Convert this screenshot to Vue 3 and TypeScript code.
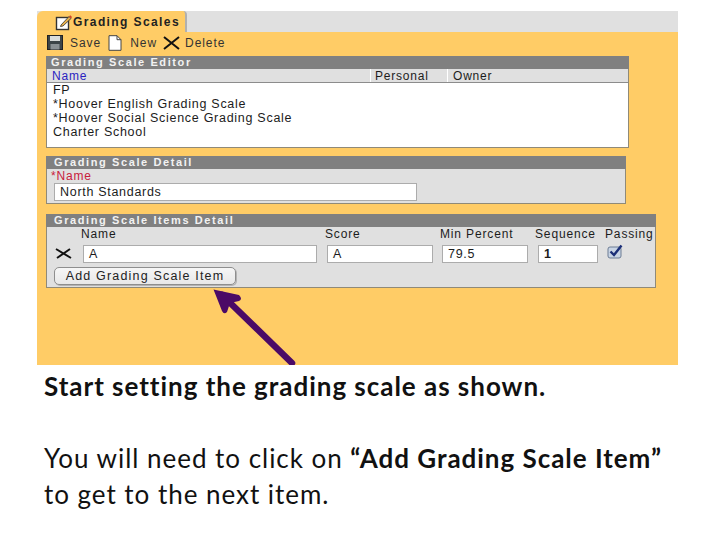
<script setup lang="ts">
const scales: string[] = ['FP', '*Hoover English Grading Scale', '*Hoover Social Science Grading Scale', 'Charter School']
</script>

<template>
  <div class="page">
    <section class="shot">
      <div class="tabstrip">
        <div class="tab">
          <svg class="tab-icon" width="18" height="17" viewBox="0 0 18 17">
            <rect x="1.5" y="3.5" width="12" height="12" fill="#fff" stroke="#333" stroke-width="1.4" />
            <path d="M6 11 L14 2.5 L16 4.5 L8 12 L5.5 12.5Z" fill="#e8b04a" stroke="#333" stroke-width="0.8" />
            <path d="M14 2.5 L15.2 1.2 L17 3 L16 4.5Z" fill="#d0402a" />
          </svg>
          <span>Grading Scales</span>
        </div>
      </div>

      <div class="toolbar">
        <svg class="save-icon" width="16" height="15" viewBox="0 0 16 15">
          <rect x="0.5" y="0.5" width="15" height="14" fill="#3c4448" stroke="#222" />
          <rect x="3" y="1" width="10" height="5" fill="#d9dcdc" />
          <rect x="3.5" y="9" width="9" height="5.5" fill="#8a9094" />
        </svg>
        <span class="tool-label save-label">Save</span>
        <svg class="new-icon" width="14" height="16" viewBox="0 0 14 16">
          <path d="M1 .7H9L13 4.7V15.3H1Z" fill="#fff" stroke="#444" />
          <path d="M9 .7V4.7H13" fill="none" stroke="#444" />
        </svg>
        <span class="tool-label new-label">New</span>
        <svg class="x-icon" width="17" height="14" viewBox="0 0 17 14">
          <path d="M1 1 L16 13 M16 1 L1 13" stroke="#111" stroke-width="2" />
        </svg>
        <span class="tool-label delete-label">Delete</span>
      </div>

      <div class="panel editor">
        <div class="panel-head head-editor">Grading Scale Editor</div>
        <div class="columns">
          <span class="col col-name">Name</span>
          <span class="col col-personal">Personal</span>
          <span class="col col-owner">Owner</span>
        </div>
        <ul class="list">
          <li v-for="s in scales" :key="s">{{ s }}</li>
        </ul>
      </div>

      <div class="panel detail">
        <div class="panel-head">Grading Scale Detail</div>
        <div class="req"><span class="req-text">*Name</span></div>
        <div class="field name-field">North Standards</div>
      </div>

      <div class="panel items">
        <div class="panel-head">Grading Scale Items Detail</div>
        <div class="item-grid">
          <span class="lbl lbl-name">Name</span>
          <span class="lbl lbl-score">Score</span>
          <span class="lbl lbl-min">Min Percent</span>
          <span class="lbl lbl-seq">Sequence</span>
          <span class="lbl lbl-pass">Passing</span>
          <svg class="x-row" width="17" height="11" viewBox="0 0 17 11">
            <path d="M1 1 L16 10 M15 1 L2 10" stroke="#111" stroke-width="2" />
          </svg>
          <div class="field f-name">A</div>
          <div class="field f-score">A</div>
          <div class="field f-min">79.5</div>
          <div class="field f-seq">1</div>
          <svg class="check" width="17" height="15" viewBox="0 0 17 15">
            <rect x="1" y="3" width="13" height="11" rx="2" fill="#c8d4e4" stroke="#6c7c94" />
            <path d="M3.5 7.5 L7 11 L14.5 1.5" fill="none" stroke="#1b2f78" stroke-width="2.4" />
          </svg>
        </div>
        <button class="add-btn" type="button">Add Grading Scale Item</button>
      </div>

      <svg class="arrow" width="90" height="84" viewBox="0 0 90 84">
        <path d="M80 75 L10 7" stroke="#4b0a66" stroke-width="6.5" stroke-linecap="round" fill="none" />
        <path d="M1.5 1.5 L27 7 Q31 11 27 13 L18 15 L15 24 Q12 27 10 23Z" fill="#4b0a66" />
      </svg>
    </section>

    <section class="caption">
      <p class="strong-line">Start setting the grading scale as shown.</p>
      <p class="body-line">You will need to click on <b>“Add Grading Scale Item”</b> to get to the next item.</p>
    </section>
  </div>
</template>

<style scoped>
.page {
  width: 720px;
  height: 540px;
  padding-top: 11px;
  box-sizing: border-box;
  background: #fff;
  overflow: hidden;
}
.shot {
  position: relative;
  margin-left: 37px;
  width: 641px;
  height: 354px;
  background: #ffcc66;
  font-family: "Liberation Sans", Arial, sans-serif;
  color: #1c1c1c;
  overflow: hidden;
}
.tabstrip {
  height: 21px;
  background: #e0e0e0;
}
.tab {
  width: 150px;
  height: 21px;
  background: #ffcc66;
  border-radius: 6px 4px 0 0;
  border-right: 2px solid #b0b0b0;
  display: flex;
  align-items: center;
  padding-left: 18px;
  box-sizing: border-box;
  font-size: 12px;
  font-weight: 700;
  letter-spacing: 1.4px;
}
.tab-icon {
  flex: none;
  margin-top: 1px;
}
.tab span {
  color: #222;
}
.toolbar {
  height: 24px;
  display: flex;
  align-items: center;
  padding-left: 10px;
  padding-bottom: 3px;
  box-sizing: border-box;
}
.tool-label {
  font-size: 12px;
  letter-spacing: 0.95px;
  color: #333;
}
.save-icon { flex: none; }
.save-label { margin-left: 7px; }
.new-icon { flex: none; margin-left: 7px; }
.new-label { margin-left: 8px; }
.x-icon { flex: none; margin-left: 6px; }
.delete-label { margin-left: 5px; }
.panel {
  margin-left: 9px;
  box-sizing: border-box;
  border: 1px solid #908a78;
  border-top: 0;
}
.panel-head {
  height: 13px;
  line-height: 13px;
  background: #808080;
  color: #f2f2f2;
  font-size: 11px;
  font-weight: 700;
  letter-spacing: 1.6px;
  padding-left: 8px;
  margin: 0 -1px 0 -1px;
  white-space: nowrap;
}
.head-editor { padding-left: 5px; }
.editor {
  width: 583px;
  height: 92px;
  background: #fff;
}
.columns {
  height: 14px;
  display: flex;
  background: #e0e0e0;
  border-bottom: 1px solid #8c8c8c;
  box-sizing: border-box;
  font-size: 12px;
  line-height: 14px;
  letter-spacing: 0.8px;
}
.col { box-sizing: border-box; }
.col-name { width: 323px; padding-left: 5px; color: #2a1fc0; }
.col-personal { width: 77px; padding-left: 4px; border-left: 1px solid #fff; }
.col-owner { flex: 1; padding-left: 5px; border-left: 1px solid #fff; }
.list {
  list-style: none;
  margin: 0;
  padding: 0 0 0 6px;
  font-size: 12.5px;
  line-height: 14px;
  letter-spacing: 0.72px;
}
.detail {
  width: 580px;
  height: 48px;
  margin-top: 8px;
  background: #e0e0e0;
}
.req {
  height: 14px;
  padding-left: 4px;
  font-size: 12px;
  line-height: 14px;
  letter-spacing: 0.8px;
}
.req-text { color: #c8203c; }
.field {
  box-sizing: border-box;
  background: #fff;
  border: 1px solid #acacac;
  font-size: 12.5px;
  letter-spacing: 0.7px;
  padding-left: 5px;
  display: flex;
  align-items: center;
  height: 18px;
}
.name-field {
  width: 363px;
  margin-left: 7px;
}
.items {
  width: 610px;
  height: 74px;
  margin-top: 10px;
  background: #e0e0e0;
}
.item-grid {
  display: grid;
  grid-template-columns: 8px 17px 11px 234px 10px 106px 9px 86px 10px 60px 9px 17px 33px;
  grid-template-rows: 18px 19px;
  font-size: 12px;
  letter-spacing: 0.85px;
}
.lbl { line-height: 14px; white-space: nowrap; }
.lbl-name { grid-column: 4; grid-row: 1; margin-left: -2px; }
.lbl-score { grid-column: 6; grid-row: 1; margin-left: -2px; }
.lbl-min { grid-column: 8; grid-row: 1; margin-left: -2px; }
.lbl-seq { grid-column: 10; grid-row: 1; margin-left: -3px; }
.lbl-pass { grid-column: 12; grid-row: 1; margin-left: -2px; }
.x-row { grid-column: 2; grid-row: 2; margin-top: 3px; }
.f-name { grid-column: 4; grid-row: 2; }
.f-score { grid-column: 6; grid-row: 2; }
.f-min { grid-column: 8; grid-row: 2; }
.f-seq { grid-column: 10; grid-row: 2; font-weight: 700; }
.check { grid-column: 12; grid-row: 2; margin-top: -1px; }
.add-btn {
  display: block;
  width: 182px;
  height: 18px;
  margin: 3px 0 0 7px;
  padding: 0;
  background: linear-gradient(#f6f6f6, #e8e8e8);
  border: 1px solid #8e8e8e;
  border-radius: 5px;
  box-shadow: 1px 1px 0 #b4b4b4;
  font-family: "Liberation Sans", Arial, sans-serif;
  font-size: 12.5px;
  letter-spacing: 1.18px;
  color: #222;
  white-space: nowrap;
}
.arrow {
  position: absolute;
  left: 175px;
  top: 277px;
}
.caption {
  margin-left: 44px;
  width: 640px;
  font-family: Lato, "Open Sans", sans-serif;
  color: #111;
  font-variant-ligatures: none;
  letter-spacing: 0.97px;
}
.caption p { margin: 0; }
.strong-line {
  padding-top: 3px;
  font-size: 26px;
  font-weight: 700;
  line-height: 36px;
}
.body-line {
  margin-top: 36px !important;
  font-size: 26px;
  line-height: 36px;
}
</style>
